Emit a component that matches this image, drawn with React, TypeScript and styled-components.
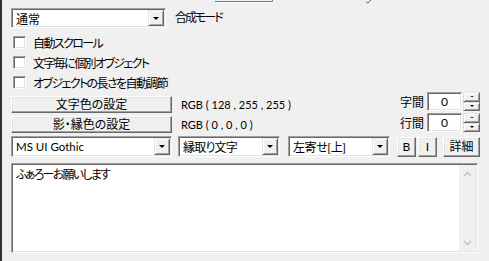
import styled, { createGlobalStyle } from 'styled-components';

const Global = createGlobalStyle`
  html, body {
    margin: 0;
    padding: 0;
    background: #f0f0f0;
  }
  body {
    width: 489px;
    height: 261px;
    overflow: hidden;
  }
`;

const Window = styled.div`
  width: 489px;
  height: 261px;
  box-sizing: border-box;
  background: #f0f0f0;
  border-left: 2px solid #2e3135;
  padding-left: 9px;
  padding-right: 9px;
  font-family: Lato, "Noto Sans CJK JP", sans-serif;
  font-size: 12px;
  font-feature-settings: "palt";
  color: #000;
  display: flex;
  flex-direction: column;
  overflow: hidden;
`;

const TopStrip = styled.div`
  height: 8px;
  display: flex;
  align-items: flex-start;
`;

const CutBox = styled.div`
  margin-left: 204px;
  width: 57px;
  height: 1px;
  border-right: 1px solid #8c8c8c;
  border-bottom: 1px solid #7a7a7a;
  box-shadow: 1px 1px 0 #fdfdfd;
`;

const Tick = styled.svg`
  margin-left: 92px;
`;

const Row = styled.div<{ $h: number }>`
  height: ${({ $h }) => $h}px;
  display: flex;
  align-items: center;
  flex-shrink: 0;
`;

const Combo = styled.div<{ $w: number; $h?: number }>`
  width: ${({ $w }) => $w}px;
  height: ${({ $h }) => $h ?? 20}px;
  box-sizing: border-box;
  background: #fff;
  border: 1px solid;
  border-color: #a0a0a0 #fff #fff #a0a0a0;
  box-shadow: inset 1px 1px 0 #696969, inset -1px -1px 0 #e3e3e3;
  display: flex;
  align-items: center;
  padding: 1px 1px 1px 4px;
  flex-shrink: 0;
`;

const ComboText = styled.span`
  flex: 1;
  white-space: nowrap;
  overflow: hidden;
`;

// letter-spacing pulls the wide Noto kana toward the narrow UI font of the original
const Text = styled.span<{ $ls?: number; $fs?: number; $ml?: number; $mt?: number }>`
  letter-spacing: ${({ $ls }) => $ls ?? 0}px;
  font-size: ${({ $fs }) => ($fs ? `${$fs}px` : 'inherit')};
  margin-left: ${({ $ml }) => $ml ?? 0}px;
  margin-top: ${({ $mt }) => $mt ?? 0}px;
  white-space: nowrap;
`;

const DropButton = styled.div`
  width: 16px;
  align-self: stretch;
  box-sizing: border-box;
  background: #f0f0f0;
  border: 1px solid;
  border-color: #e3e3e3 #696969 #696969 #e3e3e3;
  box-shadow: inset 1px 1px 0 #fff, inset -1px -1px 0 #a0a0a0;
  display: flex;
  align-items: center;
  justify-content: center;
`;

const Arrow = styled.div<{ $up?: boolean; $size?: number }>`
  width: 0;
  height: 0;
  border-left: ${({ $size }) => $size ?? 3.5}px solid transparent;
  border-right: ${({ $size }) => $size ?? 3.5}px solid transparent;
  ${({ $up, $size }) =>
    $up
      ? `border-bottom: ${($size ?? 3.5) - 1}px solid #000;`
      : `border-top: ${($size ?? 3.5)}px solid #000;`}
`;

const CheckRow = styled.label`
  height: 20px;
  display: flex;
  align-items: center;
  gap: 7px;
  padding-left: 2px;
  flex-shrink: 0;
`;

const CheckBox = styled.span`
  width: 13px;
  height: 13px;
  box-sizing: border-box;
  background: #fff;
  border: 1px solid;
  border-color: #a0a0a0 #fff #fff #a0a0a0;
  box-shadow: inset 1px 1px 0 #696969, inset -1px -1px 0 #e3e3e3;
`;

const Middle = styled.div`
  display: flex;
  height: 40px;
  flex-shrink: 0;
`;

const ColorColumn = styled.div`
  display: flex;
  flex-direction: column;
  gap: 3px;
  padding-top: 4px;
`;

const ColorRow = styled.div`
  display: flex;
  align-items: center;
  gap: 9px;
`;

const Button = styled.button<{ $w: number; $h?: number }>`
  width: ${({ $w }) => $w}px;
  height: ${({ $h }) => $h ?? 17}px;
  box-sizing: border-box;
  padding: 0;
  margin: 0;
  font: inherit;
  color: #000;
  background: #f0f0f0;
  border: 1px solid;
  border-color: #fff #696969 #696969 #fff;
  box-shadow: inset -1px -1px 0 #a0a0a0, inset 1px 1px 0 #e3e3e3;
  display: flex;
  align-items: center;
  justify-content: center;
  flex-shrink: 0;
  line-height: 1;
`;

const SpinColumn = styled.div`
  margin-left: auto;
  display: flex;
  flex-direction: column;
  gap: 2px;
`;

const SpinRow = styled.div`
  height: 19px;
  display: flex;
  align-items: center;
  gap: 3px;
`;

const SpinField = styled(Combo)`
  justify-content: center;
  padding-left: 0;
  padding-right: 0;
`;

const SpinButtons = styled.div`
  width: 17px;
  height: 19px;
  margin-left: -2px;
  display: flex;
  flex-direction: column;
`;

const SpinHalf = styled.div`
  flex: 1;
  box-sizing: border-box;
  background: #f0f0f0;
  border: 1px solid;
  border-color: #e3e3e3 #696969 #696969 #e3e3e3;
  box-shadow: inset 1px 1px 0 #fff, inset -1px -1px 0 #a0a0a0;
  display: flex;
  align-items: center;
  justify-content: center;
`;

const Toolbar = styled.div`
  height: 21px;
  margin-top: 4px;
  display: flex;
  align-items: center;
  flex-shrink: 0;
`;

const Gap = styled.div<{ $w: number }>`
  width: ${({ $w }) => $w}px;
  flex-shrink: 0;
`;

const TextArea = styled.div`
  margin-top: 6px;
  width: 467px;
  height: 90px;
  box-sizing: border-box;
  background: #fff;
  border: 1px solid;
  border-color: #a0a0a0 #fff #fff #a0a0a0;
  box-shadow: inset 1px 1px 0 #696969, inset -1px -1px 0 #e3e3e3;
  padding: 1px;
  display: flex;
  flex-shrink: 0;
`;

const TextBody = styled.div`
  flex: 1;
  padding: 2px 3px;
  line-height: 15px;
`;

const ScrollBar = styled.div`
  width: 17px;
  background: #f0f0f0;
  display: flex;
  flex-direction: column;
  justify-content: space-between;
  align-items: center;
  padding: 6px 0 5px;
`;

const Chevron = ({ up }: { up?: boolean }) => (
  <svg width="9" height="6" viewBox="0 0 9 6">
    <path
      d={up ? 'M1 5 L4.5 1.5 L8 5' : 'M1 1 L4.5 4.5 L8 1'}
      fill="none"
      stroke="#bfbfbf"
      strokeWidth="1.4"
    />
  </svg>
);

const DropDown = ({ children, width }: { children: React.ReactNode; width: number }) => (
  <Combo $w={width} $h={21}>
    <ComboText>{children}</ComboText>
    <DropButton>
      <Arrow />
    </DropButton>
  </Combo>
);

const Spin = ({ label }: { label: string }) => (
  <SpinRow>
    <Text>{label}</Text>
    <SpinField $w={35} $h={19}>0</SpinField>
    <SpinButtons>
      <SpinHalf>
        <Arrow $up $size={2.5} />
      </SpinHalf>
      <SpinHalf>
        <Arrow $size={2} />
      </SpinHalf>
    </SpinButtons>
  </SpinRow>
);

const checks = ['自動スクロール', '文字毎に個別オブジェクト', 'オブジェクトの長さを自動調節'];

export default function App() {
  return (
    <>
      <Global />
      <Window>
        <TopStrip>
          <CutBox />
          <Tick width="8" height="4" viewBox="0 0 8 4">
            <path d="M6 0 L3 3 M3 3 L1 2" stroke="#666" strokeWidth="1" fill="none" />
          </Tick>
        </TopStrip>

        <Row $h={20}>
          <Combo $w={155}>
            <ComboText>通常</ComboText>
            <DropButton>
              <Arrow />
            </DropButton>
          </Combo>
          <Text $ml={9} $mt={-3} $ls={-2}>合成モード</Text>
        </Row>

        <Row $h={4} />
        {checks.map((c) => (
          <CheckRow key={c}>
            <CheckBox />
            <Text $ls={-1.6}>{c}</Text>
          </CheckRow>
        ))}

        <Middle>
          <ColorColumn>
            <ColorRow>
              <Button $w={161}>文字色の設定</Button>
              <Text $fs={11}>RGB ( 128 , 255 , 255 )</Text>
            </ColorRow>
            <ColorRow>
              <Button $w={161}>影・縁色の設定</Button>
              <Text $fs={11}>RGB ( 0 , 0 , 0 )</Text>
            </ColorRow>
          </ColorColumn>
          <SpinColumn>
            <Spin label="字間" />
            <Spin label="行間" />
          </SpinColumn>
        </Middle>

        <Toolbar>
          <DropDown width={161}>
            <Text $fs={11.5}>MS UI Gothic</Text>
          </DropDown>
          <Gap $w={6} />
          <DropDown width={102}>
            <Text $ls={-0.8}>縁取り文字</Text>
          </DropDown>
          <Gap $w={8} />
          <DropDown width={102}>
            <Text $ls={-0.4}>左寄せ[上]</Text>
          </DropDown>
          <Gap $w={7} />
          <Button $w={19} $h={20}>B</Button>
          <Gap $w={2} />
          <Button $w={19} $h={20}>I</Button>
          <Gap $w={6} />
          <Button $w={37} $h={20}>詳細</Button>
        </Toolbar>

        <TextArea>
          <TextBody>
            <Text $ls={-1.7}>ふぁろーお願いします</Text>
          </TextBody>
          <ScrollBar>
            <Chevron up />
            <Chevron />
          </ScrollBar>
        </TextArea>
      </Window>
    </>
  );
}
